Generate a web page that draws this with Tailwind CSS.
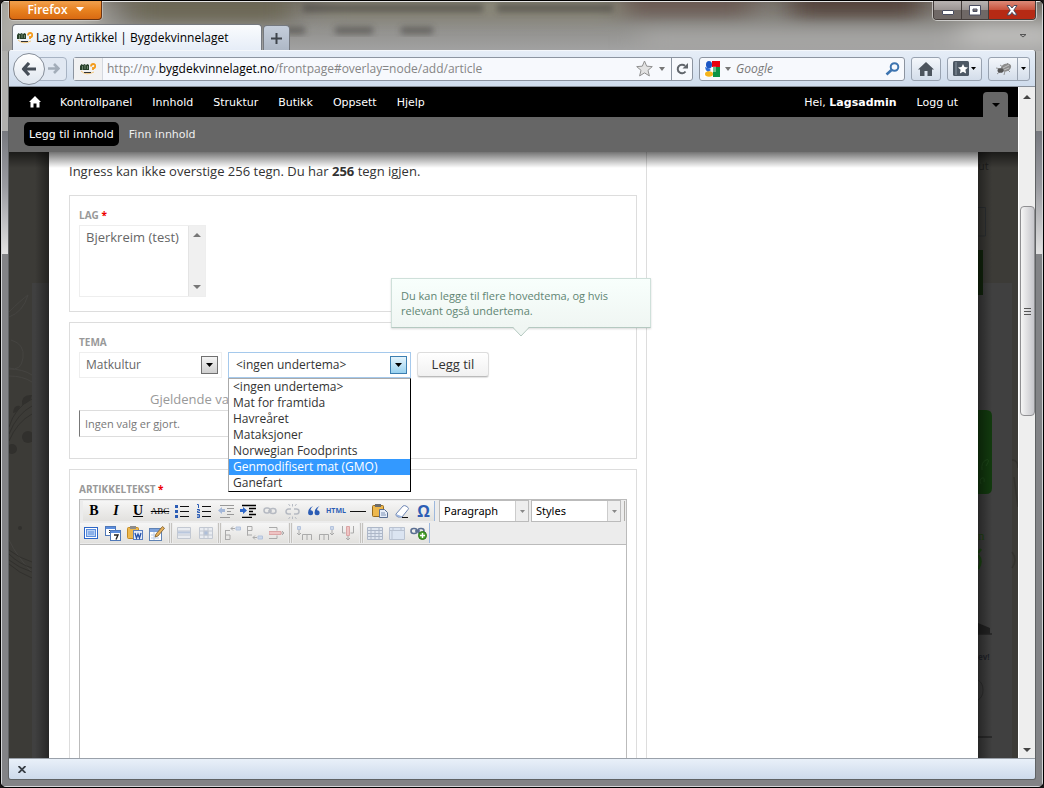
<!DOCTYPE html>
<html lang="nb">
<head>
<meta charset="utf-8">
<title>Lag ny Artikkel | Bygdekvinnelaget</title>
<script src="https://cdn.jsdelivr.net/npm/@tailwindcss/browser@4"></script>
</head>
<body class="h-screen overflow-hidden bg-[#1b1718] font-['Open_Sans',sans-serif] text-xs text-black">
<div class="relative flex h-full flex-col overflow-hidden rounded-md border border-black px-[7px] pb-[7px]">
  <!-- glass behind the title bar -->
  <svg class="absolute inset-0 h-full w-full" viewBox="0 0 1042 786" preserveAspectRatio="none" aria-hidden="true">
    <defs>
      <linearGradient id="side" x1="0" y1="0" x2="0" y2="1"><stop offset="0" stop-color="#77797f"/><stop offset=".45" stop-color="#9a9ba0"/><stop offset="1" stop-color="#e2e2e2"/></linearGradient>
      <linearGradient id="top" x1="0" y1="0" x2="0" y2="1"><stop offset="0" stop-color="#77726a"/><stop offset=".5" stop-color="#8f8e8a"/><stop offset="1" stop-color="#a2a2a2"/></linearGradient>
      <filter id="b3"><feGaussianBlur stdDeviation="3"/></filter>
      <filter id="b12" x="-20%" y="-60%" width="140%" height="220%"><feGaussianBlur stdDeviation="14 8"/></filter>
    </defs>
    <rect width="1042" height="786" fill="#828386"/>
    <rect width="1042" height="50" fill="url(#top)"/>
    <rect y="50" width="1042" height="80" fill="#b0b0ae"/>
    <rect y="130" width="1042" height="123" fill="url(#side)"/>
    <g filter="url(#b12)">
      <rect x="-10" y="-10" width="110" height="58" fill="#b0afa8"/>
      <rect x="130" y="-14" width="160" height="34" fill="#6c6754"/>
      <rect x="320" y="-4" width="300" height="20" fill="#8b8979"/>
      <rect x="620" y="-18" width="130" height="32" fill="#6a5a52"/>
      <rect x="790" y="-18" width="130" height="34" fill="#54443e"/>
      <rect x="640" y="32" width="420" height="16" fill="#a8a7a6"/>
      <rect x="960" y="22" width="100" height="26" fill="#bcbbb9"/>
    </g>
    <g filter="url(#b3)" fill="#3c3b38" opacity=".55">
      <rect x="302" y="3" width="180" height="8"/><rect x="496" y="3" width="116" height="8"/>
      <rect x="284" y="26" width="20" height="7"/><rect x="334" y="26" width="38" height="7"/><rect x="400" y="26" width="32" height="7"/>
    </g>
    <path d="M0 .5H1042" stroke="#e6e6e6"/>
    <path d="M.5 0V786M1041.500 0V786M0 785.500H1042" stroke="#d4d6d8"/>
  </svg>

  <!-- title bar -->
  <header class="relative flex shrink-0 flex-col">
    <div class="flex h-[23px] items-start justify-between">
      <button class="ml-px flex h-[19px] w-[93px] items-center justify-center gap-2 rounded-b border border-t-0 border-[#6c3310] bg-linear-to-b from-[#f0a04c] via-[#e8821f] to-[#d96a12] pb-px text-xs font-semibold text-white shadow-[0_0_0_1px_rgba(255,255,255,0.35)]">Firefox
        <svg width="8" height="5" viewBox="0 0 8 5" fill="#fff"><path d="M0 0h8L4 4.500z"/></svg></button>
      <div class="flex h-[19px] overflow-hidden rounded-b border border-t-0 border-[#433c3a] shadow-[0_0_0_1px_rgba(255,255,255,0.55)]">
        <button aria-label="Minimer" class="flex w-7 items-center justify-center border-r border-[#433c3a] bg-linear-to-b from-[#b9b4b2] via-[#9a9492] via-50% to-[#6f6866] to-50%"><svg width="12" height="12" viewBox="0 0 12 12"><rect x=".5" y="6.500" width="11" height="4" rx=".5" fill="#fff" stroke="#4a4d60"/></svg></button>
        <button aria-label="Maksimer" class="flex w-[27px] items-center justify-center border-r border-[#433c3a] bg-linear-to-b from-[#b9b4b2] via-[#9a9492] via-50% to-[#6f6866] to-50%"><svg width="12" height="11" viewBox="0 0 12 11"><path fill-rule="evenodd" d="M.5.5h11v9.500H.5zM4 4v2.500h4V4z" fill="#fff" stroke="#4a4d60"/></svg></button>
        <button aria-label="Lukk" class="flex w-[46px] items-center justify-center bg-linear-to-b from-[#dc8a78] via-[#c8503a] via-50% to-[#b62a14] to-50%"><svg width="12" height="11" viewBox="0 0 12 11"><path d="M1 .5h3L6 3 8 .5h3L7.800 5.200 11 10H8L6 7.400 4 10H1l3.200-4.800z" fill="#fff" stroke="#4a4d60"/></svg></button>
      </div>
    </div>
    <div class="flex h-[26px] items-end gap-px pl-1">
      <div class="flex h-[26px] w-[250px] items-center gap-[3px] rounded-t border border-b-0 border-[#75797f] bg-linear-to-b from-[#fafcfe] to-[#e6edf7] pl-1 text-xs whitespace-nowrap">
        <svg class="shrink-0" width="16" height="12" viewBox="0 0 16 12"><path d="M1 8Q6 13 14 9" stroke="#f3c77c" fill="none"/><path d="M0 3l1.500-2L3 2l1.500-1L6 2l1.500-1L9 2v5H0z" fill="#27402a"/><path d="M2.500 3v4M5 2v4M7.500 3v3" stroke="#8fa68d" stroke-width=".7"/><path d="M11 3.500q0-2.500 2.200-2.500t2 2.200-2.200 1.800v2" stroke="#f39b1c" stroke-width="1.800" fill="none"/><path d="M4 9.500h7" stroke="#333"/></svg>
        Lag ny Artikkel | Bygdekvinnelaget</div>
      <button aria-label="Ny fane" class="flex h-[25px] w-[27px] items-center justify-center rounded-t border border-b-0 border-[#75797f] bg-linear-to-b from-[#c5cedb] to-[#aeb8c6]"><svg width="11" height="11" viewBox="0 0 11 11" stroke="#3f454c" stroke-width="2"><path d="M5.500 0v11M0 5.500h11"/></svg></button>
      <span class="grow"></span>
      <svg class="mr-[10px] mb-3" width="6" height="4" viewBox="0 0 6 4" fill="none" stroke="#555"><path d="M0 .5h6L3 3z"/></svg>
    </div>
  </header>

  <div class="relative flex min-h-0 grow flex-col overflow-hidden rounded-[3px] border-x border-b border-[#5f6264]">
    <!-- navigation toolbar -->
    <div class="flex h-[37px] shrink-0 items-center border-t border-b border-t-[#f4f7fb] border-b-[#8a919b] bg-linear-to-b from-[#e6edf7] to-[#cfdcec] pr-[5px] pl-1">
      <button aria-label="Tilbake" class="relative z-10 flex size-8 shrink-0 items-center justify-center rounded-full border border-[#858d98] bg-linear-to-b from-white to-[#dfe6ef]"><svg width="16" height="14" viewBox="0 0 16 14" fill="none" stroke="#464e58" stroke-width="3.200" stroke-linejoin="round"><path d="M8 1L2.500 7 8 13M3 7h12"/></svg></button>
      <button aria-label="Frem" class="-ml-3 flex h-6 w-[34px] items-center justify-end rounded-r-sm border border-[#a7b3c3] bg-[#e1e8f2] pr-[6px]"><svg width="12" height="11" viewBox="0 0 12 11" fill="none" stroke="#a3adb9" stroke-width="2.600"><path d="M6 1l4.500 4.500L6 10M0 5.500h10"/></svg></button>
      <div class="ml-[6px] flex h-6 grow items-center rounded-[3px] border border-[#8c94a0] bg-[#f7f9fd]">
        <span class="flex h-full w-[29px] shrink-0 items-center justify-center border-r border-[#d5d9df] bg-[#f1f1f2]"><svg width="16" height="12" viewBox="0 0 16 12"><path d="M1 8Q6 13 14 9" stroke="#f3c77c" fill="none"/><path d="M0 3l1.500-2L3 2l1.500-1L6 2l1.500-1L9 2v5H0z" fill="#27402a"/><path d="M2.500 3v4M5 2v4M7.500 3v3" stroke="#8fa68d" stroke-width=".7"/><path d="M11 3.500q0-2.500 2.200-2.500t2 2.200-2.200 1.800v2" stroke="#f39b1c" stroke-width="1.800" fill="none"/><path d="M4 9.500h7" stroke="#333"/></svg></span>
        <a href="#" class="grow pl-1 text-xs whitespace-nowrap text-[#858585]">http://ny.<span class="text-black">bygdekvinnelaget.no</span>/frontpage#overlay=node/add/article</a>
        <svg width="17" height="17" viewBox="0 0 17 17"><path d="M8.500 1l2.200 5.200 5.600.4-4.300 3.700 1.400 5.600-4.900-3-4.900 3L5 10.300.7 6.600l5.600-.4z" fill="#e2e2e2" stroke="#909090"/></svg>
        <svg class="mx-[6px]" width="6" height="4" viewBox="0 0 6 4" fill="#777"><path d="M0 0h6L3 4z"/></svg>
        <button aria-label="Last inn på nytt" class="flex h-full w-[21px] items-center justify-center border-l border-[#8c94a0]"><svg width="12" height="12" viewBox="0 0 12 12"><path d="M9.500 8.500A4.300 4.300 0 1 1 9 2.800" fill="none" stroke="#61666c" stroke-width="2"/><path d="M12 0v5.500H6.500z" fill="#61666c"/></svg></button>
      </div>
      <div class="ml-[6px] flex h-6 w-[206px] shrink-0 items-center rounded-[3px] border border-[#8c94a0] bg-[#f7f9fd] px-1">
        <svg width="16" height="16" viewBox="0 0 16 16"><path d="M8 0h8v6H8z" fill="#e8000d"/><path d="M8 6h8v10H8z" fill="#0b9444"/><path d="M0 6h9v10H0z" fill="#fff"/><path d="M9 5.500a4 4 0 0 0 0 5.500h3V5.500z" fill="#fff" opacity=".4"/><ellipse cx="5" cy="3.700" rx="3" ry="3.700" fill="#1c57c4"/><path d="M1 6q4 1 6 3l-3 2Q1 9 1 6z" fill="#2f6fd8"/><ellipse cx="5" cy="13" rx="4" ry="2.800" fill="#f5b51b"/></svg>
        <svg class="mx-[5px]" width="6" height="4" viewBox="0 0 6 4" fill="#777"><path d="M0 0h6L3 4z"/></svg>
        <input aria-label="Søk" placeholder="Google" class="min-w-0 grow text-xs italic outline-none placeholder:text-[#777]">
        <svg width="15" height="14" viewBox="0 0 15 14" fill="none" stroke="#3d74b0"><circle cx="9.500" cy="5" r="3.800" stroke-width="2"/><path d="M6.500 8L1.500 12.500" stroke-width="2.600"/></svg>
      </div>
      <button aria-label="Startside" class="ml-[6px] flex h-6 w-[30px] shrink-0 items-center justify-center rounded-[3px] border border-[#98a2b0] bg-linear-to-b from-[#f4f7fb] to-[#d3ddea]"><svg width="16" height="14" viewBox="0 0 16 14" fill="#4d555e"><path d="M8 0l8 7.500h-2V14H9.500V9h-3v5H2V7.500H0z"/></svg></button>
      <button aria-label="Bokmerker" class="ml-[6px] flex h-6 w-[35px] shrink-0 items-center justify-center gap-[2px] rounded-[3px] border border-[#98a2b0] bg-linear-to-b from-[#f4f7fb] to-[#d3ddea]"><svg width="16" height="15" viewBox="0 0 16 15"><rect width="16" height="15" rx="1.500" fill="#4d5864"/><path d="M3 1v13" stroke="#8c97a3"/><path d="M10 3l1.500 3 3.500.4-2.600 2.400.7 3.600L10 10.700 6.900 12.400l.7-3.600L5 6.400 8.500 6z" fill="#fff"/></svg><svg width="5" height="3" viewBox="0 0 5 3"><path d="M0 0h5L2.500 3z"/></svg></button>
      <div class="ml-[6px] flex h-6 w-[42px] shrink-0 rounded-[3px] border border-[#98a2b0] bg-linear-to-b from-[#f4f7fb] to-[#d3ddea]">
        <button aria-label="Firebug" class="flex grow items-center justify-center border-r border-[#98a2b0]"><svg width="17" height="14" viewBox="0 0 17 14"><path d="M1 6l5 1M2 12l5-4M9 13l1-4M15 10l-3-3M13 1l-2 2M5 3l3 2" stroke="#8a8a8a" stroke-width=".9"/><ellipse cx="11" cy="5.500" rx="5.300" ry="3.800" transform="rotate(-24 11 5.500)" fill="#8c8c8c"/><ellipse cx="5.500" cy="8.500" rx="3" ry="2.300" fill="#555"/><path d="M8 6l6-3M9 8l5-2" stroke="#ccc" stroke-width=".8"/></svg></button>
        <button aria-label="Firebug-meny" class="flex w-[11px] items-center justify-center"><svg width="5" height="3" viewBox="0 0 5 3"><path d="M0 0h5L2.500 3z"/></svg></button>
      </div>
    </div>

    <!-- page viewport -->
    <div class="flex min-h-0 grow bg-[#3c3b37]">
      <div class="flex min-w-0 grow flex-col">
        <nav class="flex h-[30px] shrink-0 items-center bg-black pr-[10px] pl-5 font-['DejaVu_Sans',sans-serif] text-[11px] text-white">
          <a href="#" aria-label="Hjem" class="mr-[19px]"><svg width="12" height="12" viewBox="0 0 12 12" fill="#fff"><path d="M6 0l6 6h-1.500v5.500h-3V7.500h-3v4h-3V6H0z"/></svg></a>
          <div class="flex gap-5 pt-[3px]"><a href="#">Kontrollpanel</a><a href="#">Innhold</a><a href="#">Struktur</a><a href="#">Butikk</a><a href="#">Oppsett</a><a href="#">Hjelp</a></div>
          <span class="grow"></span>
          <div class="flex gap-5 pt-[3px]"><a href="#">Hei, <b>Lagsadmin</b></a><a href="#">Logg ut</a></div>
          <button aria-label="Vis snarveier" class="ml-[25px] flex h-[25px] w-[25px] items-center justify-center self-end rounded-t bg-[#666]"><svg width="8" height="4" viewBox="0 0 8 4"><path d="M0 0h8L4 4z"/></svg></button>
        </nav>
        <nav class="flex h-[35px] shrink-0 items-center gap-[5px] bg-[#666] pb-px pl-[15px] font-['DejaVu_Sans',sans-serif] text-[11px] leading-4 text-white">
          <a href="#" class="rounded-[5px] bg-black px-[5px] pt-[5px] pb-[3px]">Legg til innhold</a>
          <a href="#" class="px-[5px] pt-[5px] pb-[3px] text-[#eee]">Finn innhold</a>
        </nav>

        <div class="relative flex min-h-0 grow overflow-hidden">
          <svg class="h-full w-10 shrink-0" viewBox="0 0 40 607" preserveAspectRatio="xMinYMin slice" aria-hidden="true">
            <defs><linearGradient id="ls"><stop offset="0" stop-color="#000" stop-opacity="0"/><stop offset="1" stop-color="#000" stop-opacity=".4"/></linearGradient></defs>
            <rect width="40" height="607" fill="#3c3b37"/>
            <g fill="none" stroke="#454441"><path d="M0 165Q14 160 19 143Q12 148 0 160M2 188q14 4 12 18t-14 10M0 217q14 0 23 6M0 224q14 0 23 6M0 388Q8 405 23 420"/></g>
            <g fill="none" stroke="#31302d"><path d="M0 275Q6 255 23 247M0 282Q8 262 23 254M0 289Q8 270 23 262M0 398Q10 406 23 410M0 402Q10 412 23 416M0 408Q10 416 23 420M0 412Q10 421 23 426"/></g>
            <g fill="#31302d"><circle cx="3" cy="297" r="5"/><circle cx="19" cy="285" r="6"/><path d="M13 253q-1-11 10-10-1 7-10 10zM4 261q1-9 7-7-1 6-7 7z"/><circle cx="11" cy="376" r="2"/></g>
            <rect x="23" y="131" width="17" height="476" fill="#404040"/>
            <rect x="26" width="14" height="607" fill="url(#ls)"/>
          </svg>

          <main class="flex min-w-0 grow bg-white font-['Open_Sans',sans-serif]">
            <form class="flex w-[598px] shrink-0 flex-col border-r border-[#ddd] pt-[9px] pr-[9px] pl-5 text-[13px] text-[#333]">
              <p class="mb-[14px] leading-5">Ingress kan ikke overstige 256 tegn. Du har <b>256</b> tegn igjen.</p>

              <section class="mb-[10px] flex h-[117px] shrink-0 flex-col border border-[#ddd] px-[9px] pt-[13px]">
                <label for="lag" class="mb-1 text-[10px] leading-3 font-bold text-[#999]">LAG <span class="text-[#e00]">*</span></label>
                <div class="flex h-[72px] w-[127px] border border-[#eee]">
                  <select id="lag" multiple size="4" class="min-w-0 grow appearance-none overflow-hidden bg-white py-[2px] text-[13px] text-[#666] outline-none"><option class="px-[6px] py-0 leading-5">Bjerkreim (test)</option></select>
                  <div class="flex w-[17px] shrink-0 flex-col items-center justify-between border-l border-[#e4e4e4] bg-[#f0f0f0] py-[7px]">
                    <svg width="8" height="4" viewBox="0 0 8 4" fill="#777"><path d="M4 0l4 4H0z"/></svg><svg width="8" height="4" viewBox="0 0 8 4" fill="#777"><path d="M0 0h8L4 4z"/></svg>
                  </div>
                </div>
              </section>

              <section class="mb-[10px] flex h-[137px] shrink-0 flex-col border border-[#ddd] px-[9px] pt-[13px]">
                <label for="tema" class="mb-1 text-[10px] leading-3 font-bold text-[#999]">TEMA</label>
                <div class="flex gap-[6px]">
                  <div class="relative w-[143px]">
                    <select id="tema" class="h-[26px] w-full appearance-none border border-[#eee] bg-white pl-[6px] text-xs text-[#666] outline-none"><option>Matkultur</option></select>
                    <span class="pointer-events-none absolute top-1 right-1 flex h-[18px] w-[17px] items-center justify-center border border-[#707070] bg-linear-to-b from-[#f4f4f4] to-[#cfcfcf]"><svg width="7" height="4" viewBox="0 0 7 4"><path d="M0 0h7L3.500 4z"/></svg></span>
                  </div>
                  <div class="relative w-[183px]">
                    <select aria-label="Undertema" class="h-[26px] w-full appearance-none border border-[#a5c9ec] bg-white pl-[7px] text-xs text-[#333] outline-none"><option>&lt;ingen undertema&gt;</option></select>
                    <span class="pointer-events-none absolute top-1 right-1 flex h-[18px] w-[17px] items-center justify-center border border-[#3c7fb1] bg-linear-to-b from-[#e5f4fc] to-[#98d1ef]"><svg width="7" height="4" viewBox="0 0 7 4"><path d="M0 0h7L3.500 4z"/></svg></span>
                    <ul role="listbox" aria-label="Undertema" class="absolute top-[26px] left-0 z-20 w-full border border-t-[#aaa] border-r-black border-b-black border-l-[#aaa] bg-white text-xs leading-4 text-[#333] *:h-4 *:pl-1">
                      <li role="option">&lt;ingen undertema&gt;</li><li role="option">Mat for framtida</li><li role="option">Havreåret</li><li role="option">Mataksjoner</li><li role="option">Norwegian Foodprints</li><li role="option" aria-selected="true" class="bg-[#3399ff] text-white">Genmodifisert mat (GMO)</li><li role="option">Ganefart</li>
                    </ul>
                  </div>
                  <div class="relative">
                    <button type="button" class="h-[25px] w-[72px] rounded-[3px] border border-[#ddd] border-b-[#bbb] bg-linear-to-b from-white to-[#f1f1f1] text-[13px] text-[#333] shadow-[0_1px_1px_rgba(0,0,0,0.12)]">Legg til</button>
                    <div role="tooltip" class="absolute -top-[74px] -left-[26px] z-20 w-[260px] border border-[#cfe0da] border-b-[#b5c9c1] bg-linear-to-b from-[#f8fffc] to-[#f0f6f3] px-[9px] py-[9px] text-[11px] leading-[15px] text-[#5f8573] shadow-[0_1px_2px_rgba(0,0,0,0.15)]">Du kan legge til flere hovedtema, og hvis relevant også undertema.
                      <svg class="absolute top-full left-[120px]" width="18" height="10" viewBox="0 0 18 10"><path d="M0-1h18L9 9z" fill="#f0f6f3"/><path d="M0-.5L9 9l9-9.500" fill="none" stroke="#b5c9c1"/></svg></div>
                  </div>
                </div>
                <label for="valg" class="mt-[11px] pl-[71px] leading-5 text-[#999]">Gjeldende valg</label>
                <input id="valg" readonly value="Ingen valg er gjort." class="mt-px h-[27px] w-[200px] shrink-0 border border-[#ddd] border-l-[#777] px-[5px] text-[11px] text-[#777] outline-none">
              </section>

              <section class="flex min-h-0 grow flex-col border border-b-0 border-[#ddd] px-[9px] pt-[13px]">
                <label for="tekst" class="mb-1 text-[10px] leading-3 font-bold text-[#999]">ARTIKKELTEKST <span class="text-[#e00]">*</span></label>
                <div class="flex min-h-0 grow flex-col border border-b-0 border-[#bbb]">
                  <div class="flex flex-col border-b border-[#bbb] bg-[#ececec] text-black">
                    <div class="flex h-[22px] items-center pl-[3px] *:[button]:flex *:[button]:h-5 *:[button]:w-[22px] *:[button]:shrink-0 *:[button]:items-center *:[button]:justify-center *:[button]:bg-linear-to-b *:[button]:from-[#f6f6f6] *:[button]:to-[#e2e1de]">
                      <button type="button" class="font-['Liberation_Serif',serif] text-sm font-bold">B</button>
                      <button type="button" class="font-['Liberation_Serif',serif] text-sm font-bold italic">I</button>
                      <button type="button" class="font-['Liberation_Serif',serif] text-sm font-bold underline">U</button>
                      <button type="button" class="font-['Liberation_Serif',serif] text-[9px] line-through">ABC</button>
                      <button type="button" aria-label="Punktliste"><svg width="14" height="14" viewBox="0 0 14 14"><path d="M5 2.500h9M5 7.500h9M5 12.500h9" stroke="#111"/><path d="M0 1h3v3H0zM0 6h3v3H0zM0 11h3v3H0z" fill="#2c5db5"/></svg></button>
                      <button type="button" aria-label="Nummerert liste"><svg width="14" height="14" viewBox="0 0 14 14" fill="none"><path d="M5 2.500h9M5 7.500h9M5 12.500h9" stroke="#111"/><path d="M0 .5h1.500V4M0 5.500h2.500V7H.5v1.500H3M0 10.500h2.500v3H0M0 12h2" stroke="#2c5db5"/></svg></button>
                      <button type="button" aria-label="Minsk innrykk"><svg width="16" height="14" viewBox="0 0 16 14"><path d="M2 1.500h14M9 4.500h7M9 7.500h4M9 10.500h7M2 13.500h10" stroke="#999"/><path d="M0 6.500L4 3v2h3v3H4v2z" fill="#a5b8d8"/></svg></button>
                      <button type="button" aria-label="Øk innrykk"><svg width="16" height="14" viewBox="0 0 16 14"><path d="M2 1.500h14M9 4.500h7M9 7.500h4M9 10.500h7M2 13.500h10" stroke="#000" stroke-width="1.400"/><path d="M7 6.500L3 3v2H0v3h3v2z" fill="#2c66c8"/></svg></button>
                      <button type="button" aria-label="Lenke"><svg width="14" height="8" viewBox="0 0 14 8" fill="none" stroke="#b6bac2" stroke-width="1.500"><rect x="1" y="1" width="6" height="5" rx="2.500"/><rect x="7" y="1.500" width="6" height="5" rx="2.500"/><path d="M5 4h4"/></svg></button>
                      <button type="button" aria-label="Fjern lenke"><svg width="15" height="15" viewBox="0 0 15 15" fill="none" stroke="#b6bac2" stroke-width="1.500"><path d="M6 5H3.500a2.500 2.500 0 0 0 0 5H6M9 5h2.500a2.500 2.500 0 0 1 0 5H9"/><path d="M5 2L3.500 0M7.500 2.500V0M10 2l1.500-2M5 13l-1.500 2M7.500 12.500V15M10 13l1.500 2" stroke-width="1"/></svg></button>
                      <button type="button" aria-label="Sitat"><svg width="12" height="10" viewBox="0 0 12 10" fill="#2c5db5"><path d="M5 0Q2.500 2 2.600 4.300a2.500 2.500 0 1 1-2.500 2.500Q0 2 5 0zM11.500 0Q9 2 9.100 4.300a2.500 2.500 0 1 1-2.500 2.500Q6.500 2 11.500 0z"/></svg></button>
                      <button type="button" class="text-[7px] font-bold text-[#2c5db5]">HTML</button>
                      <button type="button" aria-label="Vannrett linje"><svg width="16" height="2" viewBox="0 0 16 2"><path d="M0 1.500h16" stroke="#111"/></svg></button>
                      <button type="button" aria-label="Lim inn tekst"><svg width="16" height="14" viewBox="0 0 16 14"><rect x=".5" y="1.500" width="11" height="11" rx="1" fill="#edb84e" stroke="#966a1e"/><path d="M3 0h6v3H3z" fill="#6c6c6c"/><path d="M7.500 5.500h5l3 3v5h-8z" fill="#e6edf8" stroke="#5a6f92"/><path d="M9 9h4M9 11h5" stroke="#7f93b5"/></svg></button>
                      <button type="button" aria-label="Fjern formatering"><svg width="15" height="13" viewBox="0 0 15 13"><path d="M1 9l7-8q1-.8 3 0l2 1.500q1 .8 0 2L7 12H3L1 10.500z" fill="#fff" stroke="#6f87b4"/><path d="M1 9l5 2 1 1H3z" fill="#9bb3dc"/><path d="M7 12.500h6" stroke="#111"/></svg></button>
                      <button type="button" class="border-r border-[#9db8dd] text-base font-bold text-[#2c5db5]">Ω</button>
                      <div class="ml-1 flex h-[22px] w-[90px] shrink-0 items-center border border-[#bbb] bg-white font-['Noto_Sans',sans-serif] text-[11px]"><select aria-label="Format" class="h-full min-w-0 grow appearance-none pl-1 outline-none"><option>Paragraph</option></select><span class="flex h-full w-[13px] items-center justify-center border-l border-[#ccc] bg-[#eee]"><svg width="5" height="3" viewBox="0 0 5 3" fill="#888"><path d="M0 0h5L2.500 3z"/></svg></span></div>
                      <div class="ml-[2px] flex h-[22px] w-[90px] shrink-0 items-center border border-[#bbb] bg-white font-['Noto_Sans',sans-serif] text-[11px]"><select aria-label="Stiler" class="h-full min-w-0 grow appearance-none pl-1 outline-none"><option>Styles</option></select><span class="flex h-full w-[13px] items-center justify-center border-l border-[#ccc] bg-[#eee]"><svg width="5" height="3" viewBox="0 0 5 3" fill="#888"><path d="M0 0h5L2.500 3z"/></svg></span></div>
                      <span class="ml-[3px] h-5 w-px bg-[#b0aeaa]"></span>
                    </div>
                    <div class="flex h-[22px] items-center *:[button]:flex *:[button]:h-5 *:[button]:w-[22px] *:[button]:shrink-0 *:[button]:items-center *:[button]:justify-center *:[button]:bg-linear-to-b *:[button]:from-[#f6f6f6] *:[button]:to-[#e2e1de] *:[i]:mx-px *:[i]:h-5 *:[i]:w-[3px] *:[i]:border-x *:[i]:border-[#c4c2be]">
                      <button type="button" aria-label="Fullskjerm"><svg width="14" height="12" viewBox="0 0 14 12"><rect x=".5" y=".5" width="13" height="11" fill="#fff" stroke="#2c66c8"/><rect x="2.500" y="2.500" width="9" height="7" fill="#b9d2f4" stroke="#5c8ede"/><path d="M4 5h6M4 7h6" stroke="#5c8ede"/></svg></button>
                      <button type="button" aria-label="Søk og erstatt"><svg width="16" height="15" viewBox="0 0 16 15"><rect x=".5" y=".5" width="10" height="9" fill="#fff" stroke="#4f78b8"/><path d="M1 1h9v2H1z" fill="#5c8ede"/><path d="M4 4.500h2.500v4M4 6.500h2" stroke="#222" fill="none"/><rect x="5.500" y="4.500" width="10" height="10" fill="#fff" stroke="#4f78b8"/><path d="M6 5h9v2H6z" fill="#5c8ede"/><path d="M9 9h4l-2 4.500" stroke="#222" stroke-width="1.400" fill="none"/></svg></button>
                      <button type="button" aria-label="Lim inn fra Word"><svg width="16" height="14" viewBox="0 0 16 14"><rect x=".5" y="1.500" width="11" height="11" rx="1" fill="#edb84e" stroke="#c48a22"/><path d="M3 0h6v3H3z" fill="#8c8c8c"/><rect x="6.500" y="4.500" width="9" height="9" fill="#e6edf8" stroke="#5a7fc0"/><path d="M8 7l1.500 5L11 8l1.500 4L14 7" fill="none" stroke="#2450a8" stroke-width="1.300"/></svg></button>
                      <button type="button" aria-label="Rediger"><svg width="16" height="15" viewBox="0 0 16 15"><rect x=".5" y="2.500" width="12" height="12" fill="#fff" stroke="#5f82b4"/><path d="M1 3h11v3H1z" fill="#7ea3dc"/><path d="M2 9h8M2 12h8M5 6v8" stroke="#bccde6"/><path d="M6 11l1-3 6.500-7.500 2 1.700L9 10z" fill="#e7b25c" stroke="#7b5a28" stroke-width=".8"/></svg></button>
                      <i></i>
                      <button type="button" aria-label="Radegenskaper"><svg width="14" height="12" viewBox="0 0 14 12" fill="#e9ecf1" stroke="#c2c8d2"><path d="M.5.5h13v11H.5zM0 4h14M0 8h14"/><path d="M1 5.500h12" stroke="#b9c7dd" stroke-width="2"/></svg></button>
                      <button type="button" aria-label="Celleegenskaper"><svg width="14" height="12" viewBox="0 0 14 12" fill="#e9ecf1" stroke="#c2c8d2"><path d="M.5.5h13v11H.5zM0 4h14M0 8h14M5 0v12M9 0v12"/><path d="M5 4h4v4H5z" fill="#aebfda"/></svg></button>
                      <i></i>
                      <button type="button" aria-label="Sett inn rad over"><svg width="16" height="14" viewBox="0 0 16 14" fill="none" stroke="#aaa"><path d="M.5 4.500V13.500M0 4.500h5M0 9h5v4.500H0M6 2.500h4M8 .5l-2 2 2 2"/><path d="M11 1h4.500v3H11z" fill="#ccd8ea" stroke="#b4c3dc"/></svg></button>
                      <button type="button" aria-label="Sett inn rad under"><svg width="16" height="14" viewBox="0 0 16 14" fill="none" stroke="#aaa"><path d="M.5 0V9.500M0 .5h5v4H0M0 9h5M6 11.500h4M8 9.500l-2 2 2 2"/><path d="M11 10h4.500v3H11z" fill="#ccd8ea" stroke="#b4c3dc"/></svg></button>
                      <button type="button" aria-label="Slett rad"><svg width="16" height="14" viewBox="0 0 16 14" fill="none" stroke="#aaa"><path d="M0 1.500h8v3M0 12.500h8v-3M15 7h-3M13 5l2 2-2 2"/><path d="M0 5.500h12v3H0z" fill="#efc4c4" stroke="#dba5a5"/></svg></button>
                      <i></i>
                      <button type="button" aria-label="Sett inn kolonne før"><svg width="15" height="14" viewBox="0 0 15 14" fill="none" stroke="#aaa"><path d="M5.500 14V8.500h9V14M10 9v5M2 4v5M0 7l2 2 2-2"/><path d="M.5.500h3v3h-3z" fill="#ccd8ea" stroke="#b4c3dc"/></svg></button>
                      <button type="button" aria-label="Sett inn kolonne etter"><svg width="15" height="14" viewBox="0 0 15 14" fill="none" stroke="#aaa"><path d="M.5 14V8.500h9V14M5 9v5M13 4v5M11 7l2 2 2-2"/><path d="M11.500.500h3v3h-3z" fill="#ccd8ea" stroke="#b4c3dc"/></svg></button>
                      <button type="button" aria-label="Slett kolonne"><svg width="14" height="14" viewBox="0 0 14 14" fill="none" stroke="#aaa"><path d="M1.500 0v7h3M12.500 0v7h-3M7 10v4M5 12l2 2 2-2"/><path d="M5.500.500h3v9h-3z" fill="#efc4c4" stroke="#dba5a5"/></svg></button>
                      <i></i>
                      <button type="button" aria-label="Del celler"><svg width="16" height="13" viewBox="0 0 16 13" fill="#dfe6f0" stroke="#adb7c8"><path d="M.5.5h15v12H.5zM0 3.500h16M0 6.500h16M0 9.500h16M4 0v13M8 3v10M12 0v13"/></svg></button>
                      <button type="button" aria-label="Slå sammen celler"><svg width="16" height="13" viewBox="0 0 16 13" fill="#dbe4f1" stroke="#b9c2d1"><path d="M.5.5h15v12H.5zM0 3.500h16M4 0v3M12 0v3M3 3v10"/></svg></button>
                      <button type="button" aria-label="Sett inn lenke" class="border-r border-[#9db8dd]"><svg width="17" height="13" viewBox="0 0 17 13"><g fill="none" stroke="#5b6f92" stroke-width="1.600"><rect x="1" y="1.500" width="6" height="5" rx="2.500"/><rect x="8" y="1.500" width="6" height="5" rx="2.500"/><path d="M5 4h5"/></g><circle cx="12.500" cy="8.500" r="4" fill="#4aa42c" stroke="#2c741a"/><path d="M10 8.500h5M12.500 6v5" stroke="#fff" stroke-width="1.400"/></svg></button>
                    </div>
                  </div>
                  <textarea id="tekst" class="min-h-0 grow resize-none outline-none"></textarea>
                </div>
              </section>
            </form>
          </main>

          <svg class="h-full w-10 shrink-0" viewBox="0 0 40 607" preserveAspectRatio="xMinYMin slice" aria-hidden="true">
            <defs><linearGradient id="rs"><stop offset="0" stop-color="#000" stop-opacity=".4"/><stop offset="1" stop-color="#000" stop-opacity="0"/></linearGradient></defs>
            <rect width="40" height="607" fill="#3c3b37"/><rect y="131" width="34" height="476" fill="#404040"/>
            <path d="M-1 55.500H7.500v28.500H-1" fill="none" stroke="#2c3033"/><rect y="98" width="5" height="45" fill="#12260c"/>
            <path d="M0 258h8q6 0 6 6v72q0 6-6 6H0z" fill="#123a0e"/><path d="M3 332q-2-5 1-6t2 4M4 318q-1-8 4-10t0 6" fill="none" stroke="#1f4a1a"/>
            <text x="0" y="18" font-family="Open Sans" font-size="11" fill="#22221f">ut</text>
            <text x="0" y="388" font-family="Liberation Serif" font-size="13" fill="#1f4410">n</text>
            <path d="M0 401l3-4M0 403q5 6 0 14" stroke="#1c4a12" stroke-width="2.500" fill="none"/>
            <path d="M0 471l12 5v6H0z" fill="#222"/><path d="M0 482h14M0 585h14" stroke="#252525" stroke-width="1.500"/>
            <text x="0" y="508" font-family="Open Sans" font-size="8" font-weight="bold" fill="#22242a">ev!</text>
            <path d="M0 528q5 3 5 10t-5 10" fill="none" stroke="#303030"/>
            <path d="M34 308q6 0 6 8M34 400q6 8 0 16M36 325l4 30" stroke="#34332f" fill="none" stroke-width="1.500"/>
            <rect width="14" height="607" fill="url(#rs)"/>
          </svg>
          <div class="pointer-events-none absolute inset-x-0 top-0 h-4 bg-linear-to-b from-black/55 to-transparent"></div>
        </div>
      </div>

      <!-- scroll bar -->
      <div class="flex w-[17px] shrink-0 flex-col items-center border-l border-white bg-[#eeeeee]" aria-hidden="true">
        <svg class="mt-2" width="8" height="4" viewBox="0 0 8 4" fill="#444"><path d="M4 0l4 4H0z"/></svg>
        <span class="h-[107px]"></span>
        <span class="flex h-[210px] w-[15px] flex-col items-center justify-center gap-[2px] rounded-sm border border-[#8f8f92] bg-linear-to-r from-[#f5f5f5] to-[#c6c6cb] *:h-px *:w-[7px] *:bg-[#555]"><b></b><b></b><b></b></span>
        <span class="grow"></span>
        <svg class="mb-[6px]" width="8" height="4" viewBox="0 0 8 4" fill="#444"><path d="M0 0h8L4 4z"/></svg>
      </div>
    </div>

    <footer class="flex h-[21px] shrink-0 items-center border-t border-[#9aa1aa] bg-linear-to-b from-[#e9f0f9] to-[#cddaeb] pl-[9px]">
      <button aria-label="Lukk tilleggslinje"><svg width="8" height="7" viewBox="0 0 8 7" stroke="#3a4048" stroke-width="1.800"><path d="M.5 0l7 7M7.500 0l-7 7"/></svg></button>
    </footer>
  </div>
</div>
</body>
</html>
